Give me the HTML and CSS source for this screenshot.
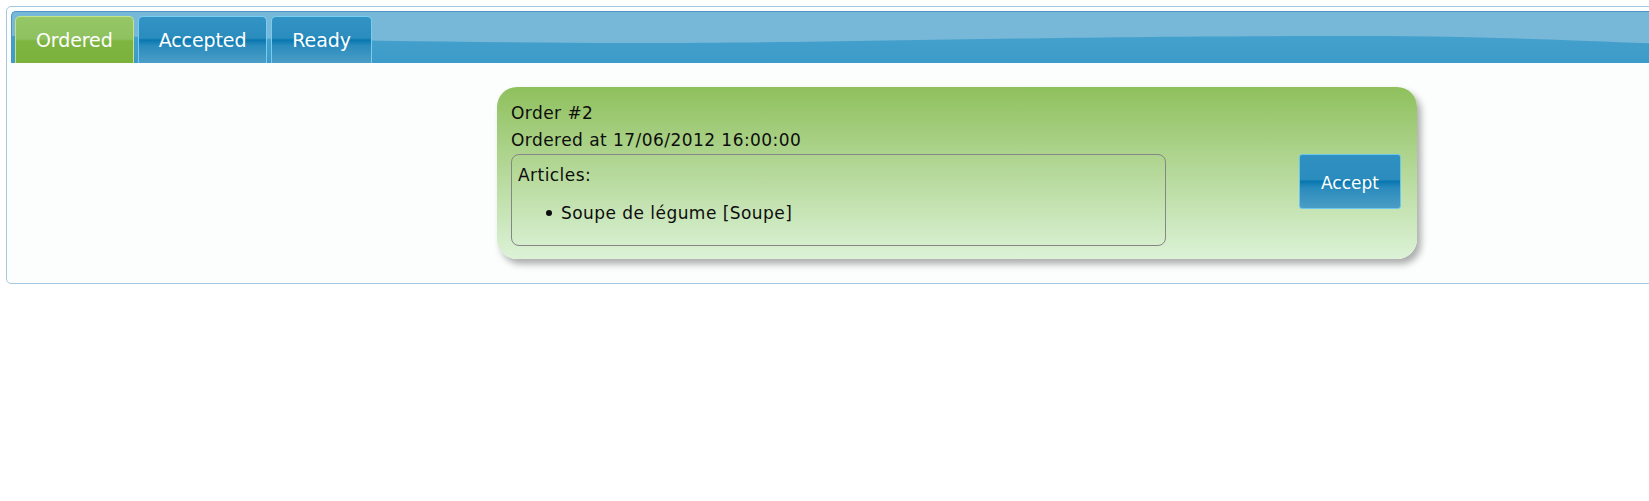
FILE: index.html
```html
<!DOCTYPE html>
<html>
<head>
<meta charset="utf-8">
<title>Orders</title>
<link rel="stylesheet" href="styles.css">
</head>
<body>
<div class="tabs">
  <ul class="tab-nav">
    <li class="tab tab-active">Ordered</li>
    <li class="tab">Accepted</li>
    <li class="tab">Ready</li>
  </ul>
  <div class="tab-panel">
    <div class="order-card">
      <div class="order-line">Order #2</div>
      <div class="order-line">Ordered at 17/06/2012 16:00:00</div>
      <div class="order-row">
        <div class="articles">
          <div class="articles-title">Articles:</div>
          <ul class="article-list">
            <li class="article-item">Soupe de légume [Soupe]</li>
          </ul>
        </div>
        <button class="accept-btn">Accept</button>
      </div>
    </div>
  </div>
</div>
</body>
</html>
```
FILE: styles.css
```css
html, body {
  margin: 0;
  padding: 0;
  background: #ffffff;
  overflow: hidden;
}
body {
  font-family: "DejaVu Sans", Verdana, sans-serif;
  padding: 6px 0 0 6px;
}
.tabs {
  box-sizing: border-box;
  width: 1902px;
  border: 1px solid #a6c9e2;
  border-radius: 5px;
  background: #fcfdfd;
  padding: 4px;
}
.tab-nav {
  list-style: none;
  margin: 0;
  padding: 4px 0 0 3px;
  height: 47px;
  display: flex;
  gap: 4px;
  border-top: 1px solid #4c93c6;
  border-left: 1px solid #4c93c6;
  border-radius: 5px 0 0 0;
  background:
    url("data:image/svg+xml;utf8,<svg xmlns='http://www.w3.org/2000/svg' width='1900' height='52'><path d='M0,24 C200,24 400,31 620,31 C850,31 1000,24 1350,24 C1500,24 1600,31 1700,33 L1900,34 L1900,0 L0,0 Z' fill='%2377b8d8'/></svg>") no-repeat 0 0 / 1900px 52px,
    linear-gradient(#4aa5cf, #3d9bc9);
}
.tab {
  box-sizing: border-box;
  height: 47px;
  padding: 0 20px;
  display: flex;
  align-items: center;
  font-size: 19px;
  letter-spacing: -0.1px;
  color: #ffffff;
  border: 1px solid #77cdf0;
  border-bottom: none;
  border-radius: 5px 5px 0 0;
  background: linear-gradient(#3294c4 0%, #2b8cbe 46%, #0877af 50%, #2a8bbd 62%, #4b9ec6 100%);
}
.tab-active {
  border-color: #c4e28c;
  background: linear-gradient(#96c768 0%, #8fc15f 48%, #7eb541 52%, #7ab23c 100%);
}
.tab-panel {
  padding: 24px 0 20px;
}
.order-card {
  box-sizing: border-box;
  width: 920px;
  margin: 0 auto;
  padding: 13px 16px 13px 14px;
  border-radius: 20px;
  background: linear-gradient(#8fc05d, #dcf2d7);
  box-shadow: 4px 5px 7px rgba(0, 0, 0, 0.32);
  font-size: 17px;
  letter-spacing: 0.45px;
  color: #0d0d0d;
}
.order-line {
  line-height: 27px;
}
.order-row {
  display: flex;
  justify-content: space-between;
  align-items: flex-start;
}
.articles {
  box-sizing: border-box;
  width: 655px;
  border: 1px solid #868686;
  border-radius: 8px;
  padding: 7px 6px 7px 6px;
}
.articles-title {
  line-height: 27px;
}
.article-list {
  list-style: none;
  margin: 11px 0 11px;
  padding-left: 43px;
  line-height: 27px;
}
.article-item::before {
  content: "";
  display: inline-block;
  width: 6px;
  height: 6px;
  border-radius: 50%;
  background: #0d0d0d;
  margin: 0 9px 0 -15px;
  vertical-align: 3px;
}
.accept-btn {
  box-sizing: border-box;
  width: 102px;
  height: 55px;
  padding: 2px 0 0;
  border: 1px solid #6cc6ee;
  border-radius: 3px;
  font-family: "DejaVu Sans", Verdana, sans-serif;
  font-size: 17px;
  color: #ffffff;
  background: linear-gradient(#2f90c1 0%, #2b8cbe 46%, #0877af 50%, #2a8bbd 62%, #4a9dc5 100%);
}
```
